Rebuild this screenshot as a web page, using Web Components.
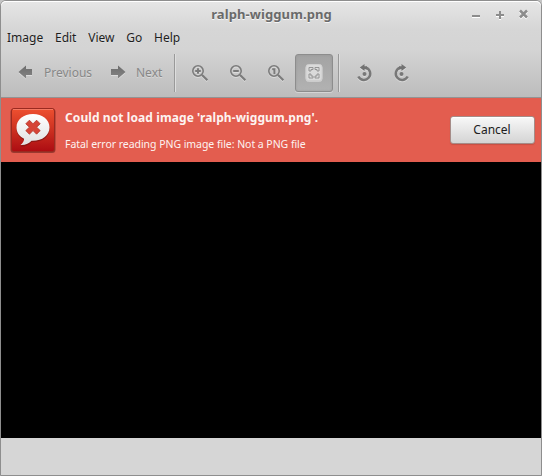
<!DOCTYPE html>
<html lang="en"><head><meta charset="utf-8"><title>ralph-wiggum.png</title>
<style>html,body{margin:0;height:100%;overflow:hidden;background:#c4c4c4}body{font:12px/16px "Noto Sans",sans-serif;color:#1e1e1e}</style></head>
<body>
<viewer-window></viewer-window>
<script>
const define=(name,html)=>customElements.define(name,class extends HTMLElement{
  constructor(){super();this.attachShadow({mode:'open'}).innerHTML=html;}
});

const ICONS={
 prev:'<path d="M.5 8 8 1.500V5h6v6H8v3.500z" fill="url(#g)"/>',
 next:'<path d="M15.500 8 8 1.500V5H1v6h7v3.500z" fill="url(#g)"/>',
 zin:'M7 4.2v5.6M4.2 7h5.6',
 zout:'M4.2 7h5.6',
 one:'M5.2 5.3H7.400V10.200'
};
const GRAD='<defs><linearGradient id="g" x2="0" y2="1"><stop stop-color="#6c6c6c"/><stop offset="1" stop-color="#858585"/></linearGradient></defs>';
const lens=d=>`<g fill="none" stroke="#7b7b7b"><circle cx="7" cy="7" r="5.2" stroke-width="1.6"/><path d="m11 11 5.4 5.2" stroke-width="2.2"/><path d="${d}" stroke-width="2"/></g>`;
const ROT='<path d="M11 3.700a6.300 6.300 0 1 1-7.700 8.800" fill="none" stroke="#787878" stroke-width="2.5"/><path d="M9.500 0v2.300h2.500v3H9.500V7L4.800 3.500z" fill="#727272"/><circle cx="9.500" cy="10" r="2" fill="#787878"/>';
customElements.define('tool-icon',class extends HTMLElement{
  connectedCallback(){
    const k=this.getAttribute('kind');let s;
    if(k==='prev'||k==='next')s=ICONS[k];
    else if(k==='left')s=ROT;
    else if(k==='right')s=`<g transform="matrix(-1 0 0 1 18 0)">${ROT}</g>`;
    else if(k==='fit')s='<g transform="translate(.5)"><rect x=".5" y=".5" width="16" height="16" rx="2.5" fill="#dadada" stroke="#cecece"/><path d="M3.500 7V3.500h4v2h-2V7zM9.500 3.500h4V7h-2V5.500h-2zM3.500 10h2v2h2v2h-4zM11.500 10h2v4h-4v-2h2z" fill="#dcdcdc" stroke="#8c8c8c" stroke-width=".9"/></g>';
    else s=lens(ICONS[k]);
    this.attachShadow({mode:'open'}).innerHTML=`<style>:host{display:block;width:18px;height:18px;filter:drop-shadow(0 1px 0 #ffffff60)}svg{display:block;overflow:visible}</style><svg width="18" height="18">${GRAD}${s}</svg>`;
  }
});

define('title-bar',`<style>
:host{display:grid;grid-template-columns:1fr auto 1fr;height:26px;padding-bottom:2px;align-items:center}
b{grid-column:2;margin-left:1px;font-size:13px;line-height:18px;letter-spacing:.1px;color:#6a6a6a;text-shadow:0 1px 0 #f5f5f5}
svg{justify-self:end;margin-right:12px;filter:drop-shadow(0 1px 0 #fff)}
</style><b><slot></slot></b><svg width="58" height="12" fill="none" stroke="#8c8c8c" stroke-width="2"><path d="M1 8h8M25 7h8M29 3v8"/><path d="m49 2.500 7 7m0-7-7 7" stroke-width="2.5"/></svg>`);

define('menu-bar',`<style>
:host{display:flex;height:18px;padding-bottom:2px;align-items:center;padding-left:6px;gap:11.800px}
::slotted(span){text-shadow:0 1px 0 #eee6}
</style><slot></slot>`);

define('tool-separator',`<style>:host{display:block;width:1px;height:38px;background:#999;box-shadow:1px 0 #dedede}</style>`);

define('tool-button',`<style>
:host{display:flex;box-sizing:border-box;height:38px;width:38px;align-items:center;justify-content:center;color:#878787;text-shadow:0 1px 0 #d9d9d9}
:host([wide]){width:auto;justify-content:flex-start;gap:8px}
:host([active]){border:1px solid #8d8d8d;border-radius:3px;background:linear-gradient(#a3a3a3,#b2b2b2);box-shadow:inset 0 0 2px #8888,0 1px #d5d5d5}
</style><slot></slot>`);

define('tool-bar',`<style>
:host{display:flex;box-sizing:border-box;height:49px;padding:5px 0 0 17px;border-bottom:1px solid #939393}
.prev{width:92px}.next{width:64px}.first{margin-right:6px}.second{margin:0 6px 0 5px}
</style>
<tool-button wide class="prev"><tool-icon kind="prev"></tool-icon><span>Previous</span></tool-button>
<tool-button wide class="next"><tool-icon kind="next"></tool-icon><span>Next</span></tool-button>
<tool-separator class="first"></tool-separator>
<tool-button><tool-icon kind="zin"></tool-icon></tool-button>
<tool-button><tool-icon kind="zout"></tool-icon></tool-button>
<tool-button><tool-icon kind="one"></tool-icon></tool-button>
<tool-button active><tool-icon kind="fit"></tool-icon></tool-button>
<tool-separator class="second"></tool-separator>
<tool-button><tool-icon kind="left"></tool-icon></tool-button>
<tool-button><tool-icon kind="right"></tool-icon></tool-button>`);

define('error-icon',`<style>:host{display:block;width:46px;height:46px}svg{display:block}</style>
<svg width="46" height="46"><defs><linearGradient id="r" x2="0" y2="1"><stop stop-color="#ee5030"/><stop offset=".45" stop-color="#d03422"/><stop offset="1" stop-color="#ac0c12"/></linearGradient><linearGradient id="w" x2="0" y2="1"><stop stop-color="#fff"/><stop offset="1" stop-color="#e0e0e0"/></linearGradient></defs>
<rect x=".5" y="1.5" width="45" height="44.5" rx="3.5" fill="#68231d" opacity=".6"/>
<rect x="1.5" y="1.5" width="43" height="43" rx="2.5" fill="url(#r)" stroke="#9a2a20"/><path d="M3 2.5h40" stroke="#f57861"/>
<path d="M23 8C13.500 8 6.500 13.500 6.500 21c0 5 3 8.800 7.600 11C14 35 12.500 37 10.500 38.500c5 .3 8.500-1.500 11-4.500C32 34.500 39.500 29 39.500 21 39.500 13.500 32.500 8 23 8z" transform="translate(0 1)" fill="#7b1512" opacity=".7"/>
<path d="M23 7C13.500 7 6.500 12.500 6.500 20.500c0 5 3 9 7.600 11.300C14 34.500 12.500 36.500 10.500 38c5 .3 8.500-1.500 11-4.200C32 34.200 39.500 28.500 39.500 20.500 39.500 12.500 32.500 7 23 7z" fill="url(#w)"/>
<path d="m19.400 13.200 3.600 3.600 3.600-3.600 3.600 3.600-3.600 3.400 3.600 3.400-3.600 3.600-3.600-3.600-3.600 3.600-3.600-3.600 3.600-3.400-3.600-3.400z" fill="#d64537" stroke="#b43328" stroke-width=".8"/></svg>`);

define('push-button',`<style>
:host{display:flex;box-sizing:border-box;width:85px;height:28px;border:1px solid #a58c88;border-radius:3px;background:linear-gradient(#f8f8f8,#d4d4d4);box-shadow:inset 0 1px #fff,0 1px 1px #983e3260;align-items:center;justify-content:center;color:#202020;padding-right:1px;margin-bottom:1px}
</style><slot></slot>`);

define('error-banner',`<style>
:host{display:flex;box-sizing:border-box;height:64px;background:#e35d4f;color:#fdf3f1;padding:0 6px 0 9px;align-items:center}
.t{flex:1;display:flex;flex-direction:column;gap:12px;margin-left:9px;white-space:nowrap}
b{font-size:12px;line-height:15px;letter-spacing:.09px}small{font-size:10.500px;line-height:14px;letter-spacing:-.045px}
</style><error-icon></error-icon><div class="t"><b><slot name="title"></slot></b><small><slot name="detail"></slot></small></div><push-button>Cancel</push-button>`);

define('viewer-window',`<style>
:host{display:flex;flex-direction:column;box-sizing:border-box;width:542px;height:476px;border:1px solid #8e8e8e;border-radius:6px 6px 0 0;background:#d6d6d6}
.chrome{border-radius:5px 5px 0 0;background:linear-gradient(#e6e6e6,#d6d6d6 28px,#d4d4d4 48px,#bcbcbc 97px);box-shadow:inset 0 1px #fff}
.canvas{height:276px;background:#000}
</style>
<div class="chrome"><title-bar>ralph-wiggum.png</title-bar>
<menu-bar><span>Image</span><span>Edit</span><span>View</span><span>Go</span><span>Help</span></menu-bar><tool-bar></tool-bar></div>
<error-banner><span slot="title">Could not load image 'ralph-wiggum.png'.</span><span slot="detail">Fatal error reading PNG image file: Not a PNG file</span></error-banner>
<div class="canvas"></div>`);
</script></body></html>
